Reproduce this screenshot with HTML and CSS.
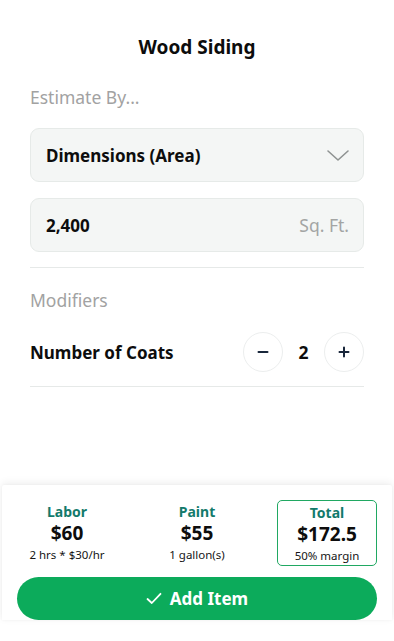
FILE: index.html
```html
<!DOCTYPE html>
<html>
<head>
<meta charset="utf-8">
<link rel="stylesheet" href="styles.css">
</head>
<body>
<div class="page">
  <div class="content">
    <h1 class="title">Wood Siding</h1>
    <div class="section-label first">Estimate By...</div>
    <div class="field select">
      <span class="field-value">Dimensions (Area)</span>
      <svg class="chevron" width="24" height="14" viewBox="0 0 24 14"><path d="M2 2 L12 11 L22 2" fill="none" stroke="#8f9392" stroke-width="1.6" stroke-linecap="round" stroke-linejoin="round"/></svg>
    </div>
    <div class="field input">
      <span class="field-value">2,400</span>
      <span class="unit">Sq. Ft.</span>
    </div>
    <div class="divider"></div>
    <div class="section-label second">Modifiers</div>
    <div class="mod-row">
      <span class="mod-name">Number of Coats</span>
      <div class="stepper">
        <button class="step-btn" aria-label="decrease">
          <svg width="12" height="12" viewBox="0 0 12 12"><path d="M1.5 6 H10.5" stroke="#18263a" stroke-width="2" stroke-linecap="round"/></svg>
        </button>
        <span class="step-val">2</span>
        <button class="step-btn" aria-label="increase">
          <svg width="12" height="12" viewBox="0 0 12 12"><path d="M1.5 6 H10.5 M6 1.5 V10.5" stroke="#18263a" stroke-width="2" stroke-linecap="round"/></svg>
        </button>
      </div>
    </div>
    <div class="divider"></div>
  </div>
  <div class="footer">
    <div class="stats">
      <div class="stat">
        <div class="stat-label">Labor</div>
        <div class="stat-value">$60</div>
        <div class="stat-sub">2 hrs * $30/hr</div>
      </div>
      <div class="stat">
        <div class="stat-label">Paint</div>
        <div class="stat-value">$55</div>
        <div class="stat-sub">1 gallon(s)</div>
      </div>
      <div class="stat total">
        <div class="stat-label">Total</div>
        <div class="stat-value">$172.5</div>
        <div class="stat-sub">50% margin</div>
      </div>
    </div>
    <button class="add-btn">
      <svg width="16" height="13" viewBox="0 0 16 13"><path d="M1.5 7 L5.8 11 L14.5 1.8" fill="none" stroke="#fff" stroke-width="1.8" stroke-linecap="round" stroke-linejoin="round"/></svg>
      <span>Add Item</span>
    </button>
  </div>
</div>
</body>
</html>
```

FILE: styles.css
```css
* { box-sizing: border-box; }
html, body { margin: 0; padding: 0; background: #fff; }
body {
  font-family: "Noto Sans", "Open Sans", sans-serif;
  color: #111;
}
.page {
  width: 394px;
  height: 641px;
  display: flex;
  flex-direction: column;
  overflow: hidden;
}
.content {
  padding: 0 30px 0 30px;
  display: flex;
  flex-direction: column;
}
.title {
  margin: 35px 0 0 0;
  font-size: 19px;
  line-height: 24px;
  font-weight: 700;
  text-align: center;
  color: #0c0c0c;
}
.section-label {
  font-size: 17.5px;
  line-height: 22px;
  color: #a2a2a2;
}
.section-label.first { margin-top: 27px; }
.section-label.second { margin-top: 21px; }
.field {
  height: 54px;
  background: #f4f6f5;
  border: 1px solid #e6eae8;
  border-radius: 9px;
  display: flex;
  align-items: center;
  justify-content: space-between;
  padding: 0 14px 0 15px;
}
.select { margin-top: 20px; }
.input { margin-top: 16px; }
.field-value {
  font-size: 17px;
  font-weight: 700;
  color: #0d0d0d;
}
.chevron { margin-top: 2px; margin-right: -1px; }
.unit {
  font-size: 17.5px;
  color: #a3a5a4;
}
.divider {
  height: 1px;
  background: #e6e9e8;
}
.input + .divider { margin-top: 15px; }
.mod-row {
  height: 42px;
  display: flex;
  align-items: center;
  justify-content: space-between;
  margin-top: 20px;
  margin-bottom: 13px;
}
.mod-name {
  font-size: 17px;
  font-weight: 700;
  color: #0d0d0d;
}
.stepper {
  display: flex;
  align-items: center;
}
.step-btn {
  width: 40px;
  height: 40px;
  border-radius: 50%;
  border: 1px solid #eceeee;
  background: #fff;
  display: flex;
  align-items: center;
  justify-content: center;
  padding: 0;
}
.step-val {
  width: 41px;
  text-align: center;
  font-size: 17.5px;
  font-weight: 700;
  color: #0d0d0d;
}
.footer {
  margin-top: auto;
  margin-bottom: 21px;
  margin-left: 2px;
  margin-right: 2px;
  background: #fff;
  box-shadow: 0 -2px 8px rgba(0,0,0,0.07), 0 0 3px rgba(0,0,0,0.04);
  padding: 15px 15px 0 15px;
  border-radius: 2px 2px 0 0;
}
.stats {
  display: grid;
  grid-template-columns: 100px 100px 100px;
  column-gap: 30px;
}
.stat {
  height: 66px;
  display: flex;
  flex-direction: column;
  align-items: center;
  padding-top: 3px;
  white-space: nowrap;
}
.total {
  border: 1px solid #20a862;
  border-radius: 5px;
}
.stat-label {
  font-size: 14px;
  line-height: 18px;
  font-weight: 700;
  color: #137a6b;
}
.stat-value {
  font-size: 19px;
  line-height: 25px;
  font-weight: 700;
  color: #0d0d0d;
}
.stat-sub {
  font-size: 11.5px;
  line-height: 18px;
  color: #151515;
}
.add-btn {
  margin-top: 11px;
  width: 100%;
  height: 43px;
  border: none;
  border-radius: 22px;
  background: #0cab5b;
  color: #fff;
  display: flex;
  align-items: center;
  justify-content: center;
  gap: 8px;
  font-family: inherit;
  font-size: 17px;
  font-weight: 700;
  padding: 0;
}
```
